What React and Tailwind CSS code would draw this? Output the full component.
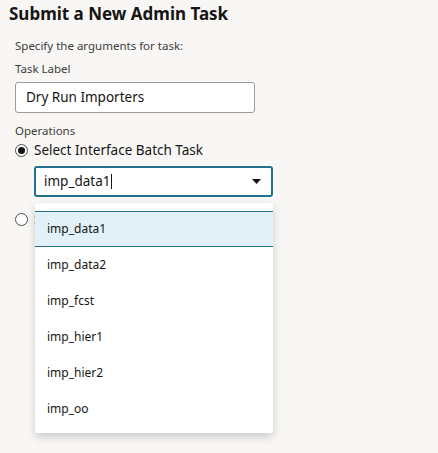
import { useState } from 'react';

const options = ['imp_data1', 'imp_data2', 'imp_fcst', 'imp_hier1', 'imp_hier2', 'imp_oo'];

function Radio({ checked }) {
  return (
    <span className="flex h-[13px] w-[13px] items-center justify-center rounded-full border border-[#4f4d4a] bg-white">
      {checked && <span className="h-[7px] w-[7px] rounded-full bg-[#161513]" />}
    </span>
  );
}

export default function App() {
  const [value] = useState('imp_data1');

  return (
    <div className="h-[453px] w-[438px] overflow-hidden bg-[#f8f7f5] text-[#161513] font-['Noto_Sans',sans-serif]">
      <h1 className="pl-[9px] pt-[2px] text-[17px] font-bold leading-[24px]">Submit a New Admin Task</h1>

      <div className="pl-[15px]">
        <p className="mt-[12px] text-[11.5px] leading-[16px] text-[#3d3c3a]">Specify the arguments for task:</p>
        <p className="mt-[7px] text-[11.5px] leading-[16px] text-[#3d3c3a]">Task Label</p>

        {/* Task label input */}
        <div className="mt-[5px] flex h-[31px] w-[240px] items-center rounded-[3px] border border-[#9e9c98] bg-white px-[10px] text-[13.5px]">
          Dry Run Importers
        </div>

        <p className="mt-[10px] text-[11.5px] leading-[16px] text-[#3d3c3a]">Operations</p>

        <div className="mt-[1px] flex items-center gap-[6px]">
          <Radio checked />
          <span className="text-[13.5px] leading-[20px]">Select Interface Batch Task</span>
        </div>

        {/* Combobox with open list */}
        <div className="relative ml-[19px] mt-[6px] w-[239px]">
          <div className="flex h-[31px] items-center rounded-[3px] border-2 border-[#22728f] bg-white pl-[8px] pr-[10px] text-[13.5px]">
            <span>{value}</span>
            <span className="ml-[1px] h-[15px] w-px bg-[#161513]" />
            <svg className="ml-auto" width="9" height="5" viewBox="0 0 9 5">
              <path d="M0 0h9L4.5 5z" fill="#161513" />
            </svg>
          </div>

          <ul className="absolute left-[1px] right-0 top-[37px] z-10 rounded-[3px] bg-white pb-[6px] pt-[8px] shadow-[0_4px_10px_rgba(0,0,0,0.18)]">
            {options.map((opt, i) => (
              <li
                key={opt}
                className={
                  i === 0
                    ? 'flex h-[36px] items-center border-y border-[#22728f] bg-[#e2f0f7] pl-[12px] text-[12px]'
                    : 'flex h-[36px] items-center pl-[12px] text-[12px]'
                }
              >
                {opt}
              </li>
            ))}
          </ul>
        </div>

        <div className="mt-[12px] flex items-center gap-[6px]">
          <Radio />
          <span className="text-[13.5px] leading-[20px]">Select Admin Command</span>
        </div>
      </div>
    </div>
  );
}
